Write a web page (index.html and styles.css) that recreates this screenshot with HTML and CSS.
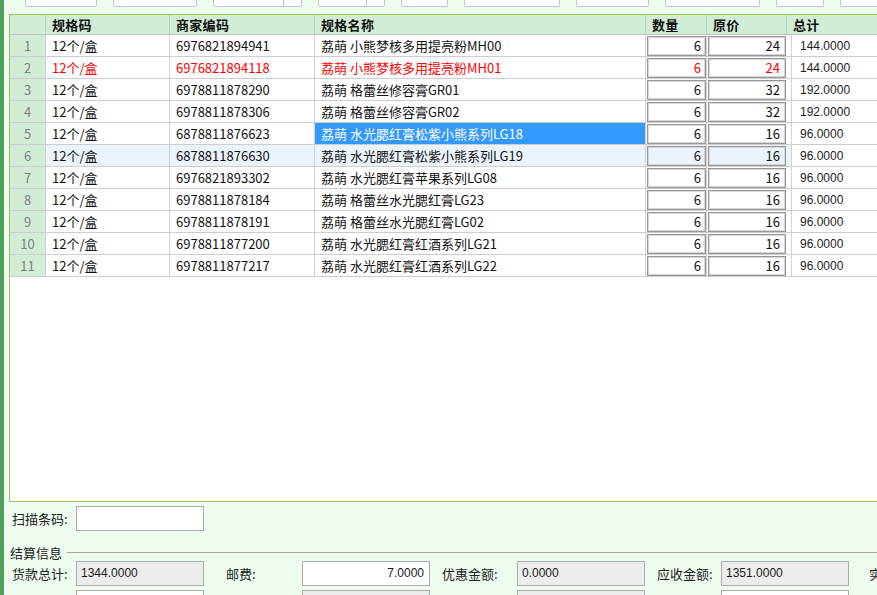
FILE: index.html
```html
<!DOCTYPE html>
<html lang="zh-CN">
  <head>
    <meta charset="UTF-8" />
    <title>订单明细</title>
    <link rel="stylesheet" href="styles.css">
  </head>
  <body>
    <div class="app">
      <div class="edge"></div>
      <div class="main">
        <div class="toolbar">
          <div class="tool-btn w72"></div>
          <div class="tool-btn w84"></div>
          <div class="tool-btn w89"><span class="drop"></span></div>
          <div class="tool-btn w67"><span class="drop"></span></div>
          <div class="tool-btn w47"></div>
          <div class="tool-btn w96"></div>
          <div class="tool-btn w73"></div>
          <div class="tool-btn w95"></div>
          <div class="tool-btn w48"></div>
          <div class="tool-btn w60"></div>
        </div>

        <div class="grid">
          <div class="grid-head">
            <div class="head-cell"></div>
            <div class="head-cell">规格码</div>
            <div class="head-cell">商家编码</div>
            <div class="head-cell">规格名称</div>
            <div class="head-cell">数量</div>
            <div class="head-cell">原价</div>
            <div class="head-cell last">总计</div>
          </div>

          <div class="row">
            <div class="cell num">1</div>
            <div class="cell">12个/盒</div>
            <div class="cell">6976821894941</div>
            <div class="cell">荔萌 小熊梦核多用提亮粉MH00</div>
            <div class="cell qty"><div class="box">6</div></div>
            <div class="cell price"><div class="box">24</div></div>
            <div class="cell total">144.0000</div>
          </div>
          <div class="row row-red">
            <div class="cell num">2</div>
            <div class="cell">12个/盒</div>
            <div class="cell">6976821894118</div>
            <div class="cell">荔萌 小熊梦核多用提亮粉MH01</div>
            <div class="cell qty"><div class="box">6</div></div>
            <div class="cell price"><div class="box">24</div></div>
            <div class="cell total">144.0000</div>
          </div>
          <div class="row">
            <div class="cell num">3</div>
            <div class="cell">12个/盒</div>
            <div class="cell">6978811878290</div>
            <div class="cell">荔萌 格蕾丝修容膏GR01</div>
            <div class="cell qty"><div class="box">6</div></div>
            <div class="cell price"><div class="box">32</div></div>
            <div class="cell total">192.0000</div>
          </div>
          <div class="row">
            <div class="cell num">4</div>
            <div class="cell">12个/盒</div>
            <div class="cell">6978811878306</div>
            <div class="cell">荔萌 格蕾丝修容膏GR02</div>
            <div class="cell qty"><div class="box">6</div></div>
            <div class="cell price"><div class="box">32</div></div>
            <div class="cell total">192.0000</div>
          </div>
          <div class="row">
            <div class="cell num">5</div>
            <div class="cell">12个/盒</div>
            <div class="cell">6878811876623</div>
            <div class="cell selected">荔萌 水光腮红膏松紫小熊系列LG18</div>
            <div class="cell qty"><div class="box">6</div></div>
            <div class="cell price"><div class="box">16</div></div>
            <div class="cell total">96.0000</div>
          </div>
          <div class="row row-hover">
            <div class="cell num">6</div>
            <div class="cell">12个/盒</div>
            <div class="cell">6878811876630</div>
            <div class="cell">荔萌 水光腮红膏松紫小熊系列LG19</div>
            <div class="cell qty"><div class="box">6</div></div>
            <div class="cell price"><div class="box">16</div></div>
            <div class="cell total">96.0000</div>
          </div>
          <div class="row">
            <div class="cell num">7</div>
            <div class="cell">12个/盒</div>
            <div class="cell">6976821893302</div>
            <div class="cell">荔萌 水光腮红膏苹果系列LG08</div>
            <div class="cell qty"><div class="box">6</div></div>
            <div class="cell price"><div class="box">16</div></div>
            <div class="cell total">96.0000</div>
          </div>
          <div class="row">
            <div class="cell num">8</div>
            <div class="cell">12个/盒</div>
            <div class="cell">6978811878184</div>
            <div class="cell">荔萌 格蕾丝水光腮红膏LG23</div>
            <div class="cell qty"><div class="box">6</div></div>
            <div class="cell price"><div class="box">16</div></div>
            <div class="cell total">96.0000</div>
          </div>
          <div class="row">
            <div class="cell num">9</div>
            <div class="cell">12个/盒</div>
            <div class="cell">6978811878191</div>
            <div class="cell">荔萌 格蕾丝水光腮红膏LG02</div>
            <div class="cell qty"><div class="box">6</div></div>
            <div class="cell price"><div class="box">16</div></div>
            <div class="cell total">96.0000</div>
          </div>
          <div class="row">
            <div class="cell num">10</div>
            <div class="cell">12个/盒</div>
            <div class="cell">6978811877200</div>
            <div class="cell">荔萌 水光腮红膏红酒系列LG21</div>
            <div class="cell qty"><div class="box">6</div></div>
            <div class="cell price"><div class="box">16</div></div>
            <div class="cell total">96.0000</div>
          </div>
          <div class="row">
            <div class="cell num">11</div>
            <div class="cell">12个/盒</div>
            <div class="cell">6978811877217</div>
            <div class="cell">荔萌 水光腮红膏红酒系列LG22</div>
            <div class="cell qty"><div class="box">6</div></div>
            <div class="cell price"><div class="box">16</div></div>
            <div class="cell total">96.0000</div>
          </div>
        </div>

        <div class="scan-row">
          <span class="label w64">扫描条码:</span>
          <div class="field-input"></div>
        </div>

        <div class="section-title">
          <span>结算信息</span>
          <span class="rule"></span>
        </div>

        <div class="calc-row">
          <div class="field f1">
            <span class="label w64">货款总计:</span>
            <div class="field-input readonly">1344.0000</div>
          </div>
          <div class="field f2">
            <span class="label w76">邮费:</span>
            <div class="field-input right">7.0000</div>
          </div>
          <div class="field f3">
            <span class="label w75">优惠金额:</span>
            <div class="field-input readonly">0.0000</div>
          </div>
          <div class="field f4">
            <span class="label w64">应收金额:</span>
            <div class="field-input readonly">1351.0000</div>
          </div>
          <div class="field">
            <span class="label">实收金额:</span>
          </div>
        </div>

        <div class="calc-row">
          <div class="field f1">
            <span class="label w64">其他费用:</span>
            <div class="field-input"></div>
          </div>
          <div class="field f2">
            <span class="label w76"></span>
            <div class="field-input readonly"></div>
          </div>
          <div class="field f3">
            <span class="label w75"></span>
            <div class="field-input readonly"></div>
          </div>
          <div class="field f4">
            <span class="label w64"></span>
            <div class="field-input"></div>
          </div>
        </div>
      </div>
    </div>
  </body>
</html>
```

FILE: styles.css
```css
body {
  margin: 0;
  height: 595px;
  overflow: hidden;
  background: #eefcf0;
  font-family: "Noto Sans CJK SC", sans-serif;
  font-size: 13px;
  color: #111;
}

.app {
  display: flex;
  height: 595px;
}

.edge {
  flex: none;
  width: 4px;
  background: #4fa25c;
}

.main {
  flex: 1;
  min-width: 0;
}

/* toolbar, only the lower edge of the buttons is on screen */
.toolbar {
  display: flex;
  gap: 16px;
  height: 14px;
  padding-left: 21px;
  overflow: hidden;
}

.tool-btn {
  flex: none;
  display: flex;
  height: 24px;
  margin-top: -17px;
  box-sizing: border-box;
  background: #fff;
  border: 1px solid #c6c6c6;
  border-radius: 2px;
}

.tool-btn .drop {
  width: 17px;
  margin-left: auto;
  border-left: 1px solid #c6c6c6;
}

.w72 { width: 72px; }
.w84 { width: 84px; }
.w89 { width: 89px; }
.w67 { width: 67px; }
.w47 { width: 47px; }
.w96 { width: 96px; }
.w73 { width: 73px; }
.w95 { width: 95px; }
.w48 { width: 48px; }
.w60 { width: 60px; }

/* data grid */
.grid {
  height: 488px;
  margin-left: 5px;
  margin-right: -40px;
  box-sizing: border-box;
  border: 1px solid #9cc35a;
  background: #fff;
  overflow: hidden;
}

.grid-head {
  display: grid;
  grid-template-columns: 36px 124px 145px 331px 61px 80px 1fr;
  height: 20px;
  box-sizing: border-box;
  background: #d1edd6;
  border-bottom: 1px solid #c2c2c2;
}

.head-cell {
  padding-left: 6px;
  border-right: 1px solid #b9d3be;
  font-weight: bold;
  line-height: 19px;
  letter-spacing: 0.3px;
}

.head-cell.last {
  border-right: 0;
}

.row {
  display: grid;
  grid-template-columns: 36px 124px 145px 331px 61px 85px 1fr;
  height: 22px;
  box-sizing: border-box;
  border-bottom: 1px solid #cdcdcd;
}

.cell {
  padding-left: 6px;
  border-right: 1px solid #d2d2d2;
  line-height: 21px;
  white-space: nowrap;
  overflow: hidden;
}

.cell.num {
  padding: 0;
  background: #d1edd6;
  color: #808080;
  text-align: center;
}

.cell.qty {
  padding: 1px 0 0 1px;
}

.cell.price {
  padding: 1px 5px 0 1px;
}

.box {
  height: 20px;
  box-sizing: border-box;
  padding-right: 4px;
  border: 1px solid #979797;
  box-shadow: inset 0 0 0 1px #d6d6d6;
  background: #fff;
  text-align: right;
  line-height: 18px;
}

.cell.price .box {
  padding-right: 5px;
}

.cell.total {
  padding-left: 8px;
  border-right: 0;
  font-family: "Liberation Sans", sans-serif;
  font-size: 12px;
  line-height: 23px;
  color: #1c1c1c;
}

.row-red .cell {
  color: #f00;
}

.row-red .cell.num {
  color: #808080;
}

.row-red .cell.total {
  color: #1c1c1c;
}

.cell.selected {
  background: #3399ff;
  color: #fff;
}

.row-hover .cell,
.row-hover .box {
  background: #ebf4fd;
}

.row-hover .cell.num {
  background: #d1edd6;
}

.row-hover .cell.total {
  background: #fff;
}

/* bottom form */
.label {
  flex: none;
  color: #222;
  white-space: nowrap;
}

.w64.label { width: 64px; }
.w76.label { width: 76px; }
.w75.label { width: 75px; }

.field-input {
  flex: none;
  width: 128px;
  height: 25px;
  box-sizing: border-box;
  padding: 0 4px;
  border: 1px solid #acacac;
  background: #fff;
  font-family: "Liberation Sans", sans-serif;
  font-size: 12px;
  line-height: 23px;
  color: #1a1a1a;
}

.field-input.readonly {
  background: #ececec;
}

.field-input.right {
  padding-right: 5px;
  text-align: right;
}

.scan-row {
  display: flex;
  align-items: center;
  height: 25px;
  margin-top: 4px;
  padding-left: 8px;
}

.section-title {
  display: flex;
  align-items: center;
  height: 18px;
  margin-top: 12px;
  padding-left: 6px;
  color: #222;
}

.section-title .rule {
  flex: 1;
  height: 1px;
  margin-left: 5px;
  background: #a3a3a3;
}

.calc-row {
  display: flex;
  height: 25px;
  margin-bottom: 4px;
  padding-left: 8px;
}

.field {
  flex: none;
  display: flex;
  align-items: center;
}

.f1 { width: 214px; }
.f2 { width: 216px; }
.f3 { width: 215px; }
.f4 { width: 212px; }
```
